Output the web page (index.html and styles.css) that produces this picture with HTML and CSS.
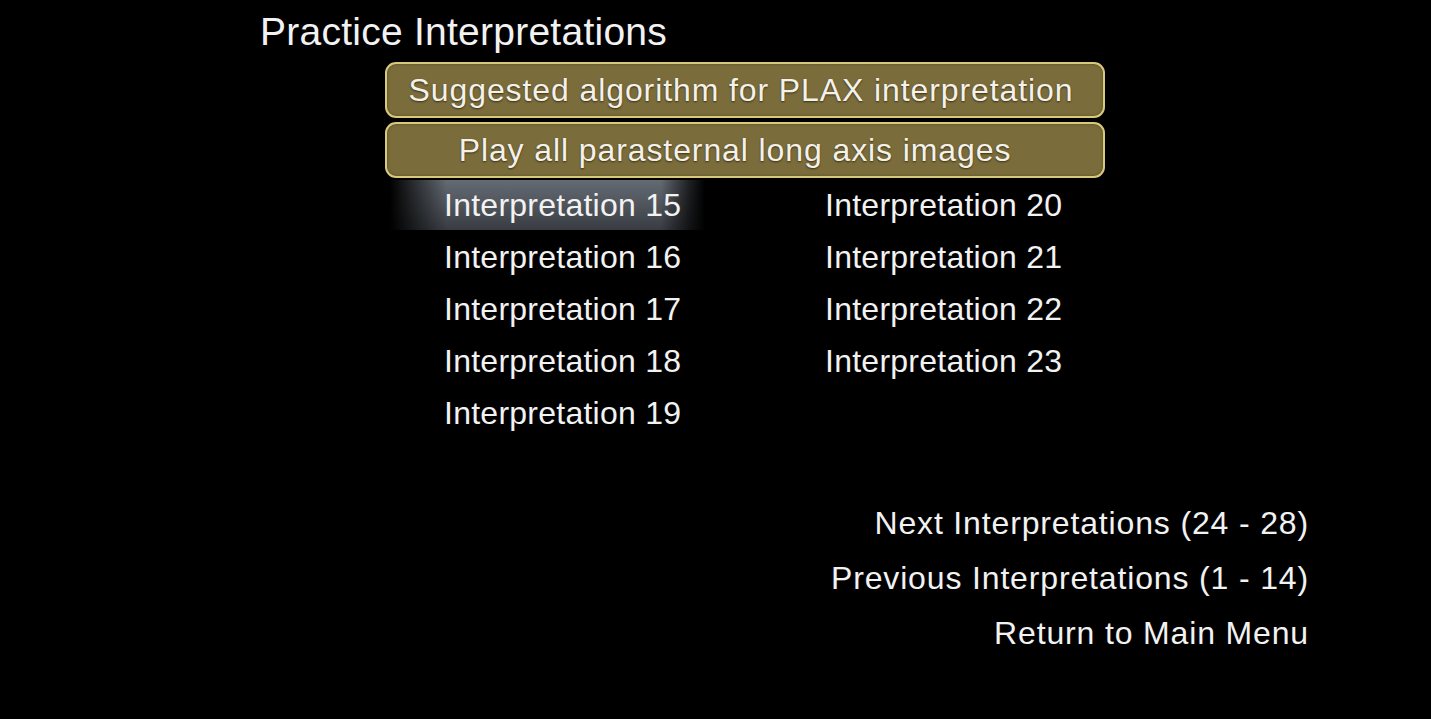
FILE: index.html
```html
<!DOCTYPE html>
<html>
<head>
<meta charset="utf-8">
<link rel="stylesheet" href="styles.css">
</head>
<body>
<div class="page">
  <h1 class="title">Practice Interpretations</h1>
  <div class="buttons">
    <div class="btn btn-algo">Suggested algorithm for PLAX interpretation</div>
    <div class="btn btn-play">Play all parasternal long axis images</div>
  </div>
  <div class="grid">
    <div class="col">
      <div class="item active">Interpretation 15</div>
      <div class="item">Interpretation 16</div>
      <div class="item">Interpretation 17</div>
      <div class="item">Interpretation 18</div>
      <div class="item">Interpretation 19</div>
    </div>
    <div class="col">
      <div class="item">Interpretation 20</div>
      <div class="item">Interpretation 21</div>
      <div class="item">Interpretation 22</div>
      <div class="item">Interpretation 23</div>
    </div>
  </div>
  <div class="links">
    <div class="link">Next Interpretations (24 - 28)</div>
    <div class="link">Previous Interpretations (1 - 14)</div>
    <div class="link">Return to Main Menu</div>
  </div>
</div>
</body>
</html>
```
FILE: styles.css
```css
html, body {
  margin: 0;
  padding: 0;
  background: #000;
}
body {
  width: 1431px;
  height: 719px;
  overflow: hidden;
  font-family: "Liberation Sans", Arial, sans-serif;
  color: #f2f2f2;
}
.page {
  padding-top: 8px;
}
.title {
  margin: 0 0 0 260px;
  font-size: 39px;
  font-weight: normal;
  line-height: 48px;
  letter-spacing: 0.25px;
  text-shadow: 0 0 2px rgba(0,0,0,0.8);
}
.buttons {
  margin: 6px 0 0 385px;
  width: 720px;
  display: flex;
  flex-direction: column;
  gap: 4px;
}
.btn {
  box-sizing: border-box;
  height: 56px;
  border: 2px solid #d9c97c;
  border-radius: 11px;
  background: #7b6d3b;
  box-shadow: inset 0 0 3px rgba(60,50,20,0.6);
  font-size: 32px;
  letter-spacing: 0.9px;
  line-height: 52px;
  text-align: center;
  color: #f4f1ea;
  text-shadow: 0 1px 2px rgba(40,30,10,0.8);
}
.btn-algo {
  padding-right: 8px;
}
.btn-play {
  padding-right: 20px;
}
.grid {
  margin: 2px 0 0 390px;
  display: grid;
  grid-template-columns: 315px 315px;
  column-gap: 66px;
}
.col {
  display: flex;
  flex-direction: column;
}
.item {
  height: 52px;
  padding-left: 54px;
  font-size: 32px;
  letter-spacing: 0.25px;
  line-height: 50px;
  box-sizing: border-box;
}
.active {
  height: 50px;
  margin-bottom: 2px;
  background:
    linear-gradient(90deg, #000 0%, rgba(0,0,0,0.55) 8%, rgba(0,0,0,0) 18%, rgba(0,0,0,0) 86%, rgba(0,0,0,0.7) 95%, #000 100%),
    linear-gradient(180deg, #646a72 0%, #50555c 50%, #383c42 100%);
}
.links {
  margin-top: 56px;
  width: 1309px;
  display: flex;
  flex-direction: column;
  align-items: flex-end;
}
.link {
  font-size: 32px;
  letter-spacing: 0.85px;
  line-height: 55px;
}
```
